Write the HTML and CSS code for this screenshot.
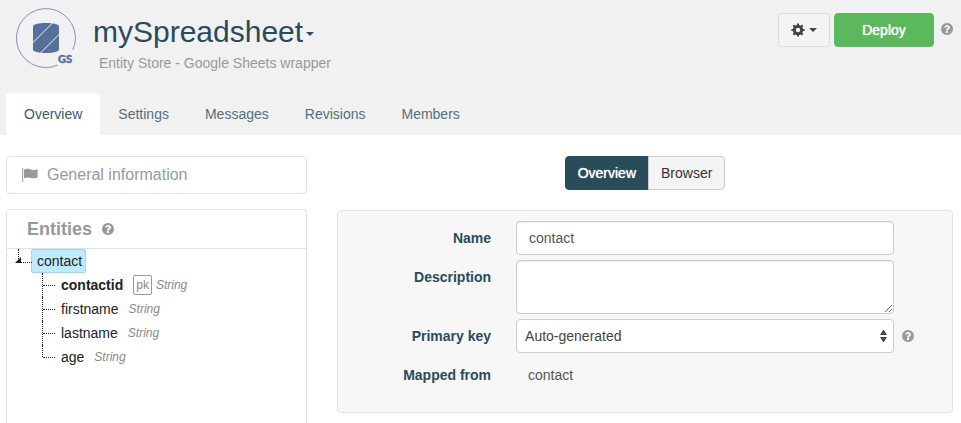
FILE: index.html
```html
<!DOCTYPE html>
<html lang="en">
<head>
<meta charset="utf-8">
<meta name="viewport" content="width=device-width, initial-scale=1">
<title>mySpreadsheet</title>
<link rel="stylesheet" href="styles.css">
</head>
<body>
<svg class="sprite" aria-hidden="true">
  <symbol id="help" viewBox="0 0 1536 1536"><path d="M896 1248v-192q0 -14 -9 -23t-23 -9h-192q-14 0 -23 9t-9 23v192q0 14 9 23t23 9h192q14 0 23 -9t9 -23zM1152 576q0 -88 -55.5 -163t-138.5 -116t-170 -41q-243 0 -371 213q-15 24 8 42l132 100q7 6 19 6q16 0 25 -12q53 -68 86 -92q34 -24 86 -24q48 0 85.5 26t37.5 59q0 38 -20 61t-68 45q-63 28 -115.5 86.5t-52.5 125.5v36q0 14 9 23t23 9h192q14 0 23 -9t9 -23q0 -19 21.5 -49.5t54.5 -49.5q32 -18 49 -28.5t46 -35t44.5 -48t28 -60.5t12.5 -81zM1536 768q0 209 -103 385.5t-279.5 279.5t-385.5 103t-385.5 -103t-279.5 -279.5t-103 -385.5t103 -385.5t279.5 -279.5t385.5 -103t385.5 103t279.5 279.5t103 385.5z"/></symbol>
</svg>
<div class="page">
  <header class="header">
    <div class="masthead">
      <svg class="logo" viewBox="0 0 62 60" aria-hidden="true">
        <path class="logo-ring" d="M56.900 42A29.500 29.500 0 1 0 41.700 57.100"/>
        <path class="logo-store" d="M17 18.500C17 16.500 22.500 15 30 15S43 16.500 43 18.500V41.500C43 43.500 37.500 45 30 45S17 43.500 17 41.500Z"/>
        <path class="logo-stripe" d="M16.500 35L37 14.500M24 45.500L43.500 26"/>
        <text class="logo-text" x="42" y="55">GS</text>
      </svg>
      <div class="heading">
        <h1 class="title">mySpreadsheet<span class="caret"></span></h1>
        <p class="subtitle">Entity Store - Google Sheets wrapper</p>
      </div>
      <div class="actions">
        <button class="btn btn-gear" type="button" aria-label="Options">
          <svg class="gear" viewBox="0 0 14 14" aria-hidden="true"><circle cx="7" cy="7" r="3.700"/><path d="M7 .4v3M7 10.600v3M.4 7h3M10.600 7h3M2.300 2.300l2.100 2.100M9.600 9.600l2.100 2.100M2.300 11.700l2.100-2.100M9.600 4.400l2.100-2.100"/></svg>
          <span class="caret"></span>
        </button>
        <button class="btn btn-deploy" type="button">Deploy</button>
        <svg class="help"><use href="#help"/></svg>
      </div>
    </div>
    <nav class="tabs">
      <a class="tab tab-active" href="#overview">Overview</a>
      <a class="tab" href="#settings">Settings</a>
      <a class="tab" href="#messages">Messages</a>
      <a class="tab" href="#revisions">Revisions</a>
      <a class="tab" href="#members">Members</a>
    </nav>
  </header>
  <main class="content">
    <aside class="side">
      <a class="panel general" href="#general">
        <svg class="flag" viewBox="0 0 16 14" aria-hidden="true"><path d="M.2 0h1v14h-1zM2 1.800C4 .7 6 .5 8 1.300s4.500 1 7.600 0v8.200c-2.600 1.100-5 1-7 .4s-4-.7-6.600.4z"/></svg>
        General information
      </a>
      <section class="panel entities">
        <h2 class="entities-title">Entities <svg class="help"><use href="#help"/></svg></h2>
        <ul class="tree">
          <li class="root">
            <span class="node node-selected">contact</span>
            <ul class="fields">
              <li class="field"><b>contactid</b><span class="pk">pk</span><i class="type type-pk">String</i></li>
              <li class="field">firstname<i class="type">String</i></li>
              <li class="field">lastname<i class="type">String</i></li>
              <li class="field">age<i class="type">String</i></li>
            </ul>
          </li>
        </ul>
      </section>
    </aside>
    <section class="main">
      <div class="switch">
        <button class="btn switch-btn switch-on" type="button">Overview</button>
        <button class="btn switch-btn" type="button">Browser</button>
      </div>
      <form class="panel form">
        <label class="label" for="name">Name</label>
        <input class="control" id="name" type="text" value="contact">
        <label class="label" for="description">Description</label>
        <textarea class="control" id="description" rows="2"></textarea>
        <label class="label" for="key">Primary key</label>
        <div class="select-wrap">
          <select class="control select" id="key"><option>Auto-generated</option></select>
          <svg class="arrows" viewBox="0 0 7 14" aria-hidden="true"><path d="M3.500 .5L7 6H0zM3.500 13.500L7 8H0z"/></svg>
        </div>
        <svg class="help help-key"><use href="#help"/></svg>
        <label class="label" for="mapped">Mapped from</label>
        <output class="static" id="mapped">contact</output>
      </form>
    </section>
  </main>
</div>
</body>
</html>
```
FILE: styles.css
```css
* { box-sizing: border-box; }

body {
  margin: 0;
  background: #fff;
  color: #222;
  font: 14px/20px "Liberation Sans", Arial, sans-serif;
}

h1, h2, p, ul { margin: 0; padding: 0; list-style: none; }
a { color: inherit; text-decoration: none; }
button, input, textarea, select { font: inherit; margin: 0; }
svg { display: block; }

.sprite { display: none; }
.page { min-height: 100vh; display: flex; flex-direction: column; }

.header { background: #f1f1f1; }
.masthead { display: flex; padding: 8px 8px 20px 16px; }
.logo { width: 62px; height: 60px; overflow: visible; }
.logo-ring { fill: none; stroke: #7f94b8; stroke-width: 1; }
.logo-store { fill: #566f9b; }
.logo-stripe { stroke: #f1f1f1; stroke-width: 1; }
.logo-text { fill: #566f9b; stroke: #566f9b; stroke-width: .4; font: 900 11px Lato, sans-serif; }

.heading { flex: 1; padding: 6px 0 0 15px; }
.title { color: #2a4b5a; font-size: 30px; line-height: 36px; font-weight: 400; }
.subtitle { padding: 3px 0 0 6px; color: #999; }
.caret {
  display: inline-block;
  border: solid transparent;
  border-width: 4px 4px 0;
  border-top-color: currentColor;
  vertical-align: middle;
}
.title .caret { margin-left: 3px; }

.actions { display: flex; align-items: flex-start; padding-top: 5px; }
.btn {
  height: 34px;
  border: 1px solid #ccc;
  border-radius: 4px;
  background: #f4f4f4;
  color: #333;
  padding: 0 12px;
}
.btn-gear { display: flex; align-items: center; gap: 4px; margin-right: 4px; border-color: #ddd; color: #444; }
.gear { width: 14px; height: 14px; fill: none; stroke: #444; stroke-width: 2; }
.gear circle { stroke-width: 3; }
.btn-deploy {
  width: 100px;
  border-color: #5cb85c;
  background: #5cb85c;
  color: #fff;
  text-shadow: 0 0 1px #fff;
}
.help { width: 12px; height: 12px; fill: #999; }
.actions .help { margin: 10px 0 0 7px; }

.tabs { display: flex; padding-left: 6px; }
.tab { padding: 11px 18px; border-radius: 4px 4px 0 0; color: #54707c; }
.tab-active { background: #fff; color: #3b5a6a; }

.content {
  flex: 1;
  display: grid;
  grid-template-columns: 301fr 616fr;
  gap: 30px;
  padding: 21px 8px 0 6px;
}
.panel { border: 1px solid #e2e2e2; border-radius: 4px; }

.side { display: flex; flex-direction: column; gap: 15px; }
.general { display: flex; align-items: center; gap: 9px; padding: 8px 15px; color: #999; font-size: 16px; }
.flag { width: 16px; height: 14px; fill: #999; }
.entities { flex: 1; border-bottom: 0; border-radius: 4px 4px 0 0; }
.entities-title {
  display: flex;
  align-items: center;
  gap: 10px;
  padding: 9px 20px;
  border-bottom: 1px solid #e2e2e2;
  color: #999;
  font-size: 18px;
}

.tree { padding-left: 24px; line-height: 24px; }
.root { position: relative; }
.root::before {
  content: "";
  position: absolute;
  left: -13px;
  top: 0;
  width: 13px;
  height: 13px;
  border: dotted #222;
  border-width: 0 0 1px 1px;
}
.root::after {
  content: "";
  position: absolute;
  left: -16px;
  top: 8px;
  border: solid transparent;
  border-width: 0 0 6px 6px;
  border-bottom-color: #222;
}
.node { display: inline-block; padding: 0 3px 0 5px; border: 1px solid transparent; border-radius: 2px; line-height: 22px; vertical-align: top; }
.node-selected { background: #beebff; border-color: #a5d5ec; }
.fields { padding-left: 30px; }
.field { position: relative; display: flex; align-items: center; height: 24px; }
.field::before {
  content: "";
  position: absolute;
  left: -19px;
  top: 0;
  height: 100%;
  border-left: 1px dotted #222;
}
.field:last-child::before { height: 12px; }
.field::after {
  content: "";
  position: absolute;
  left: -18px;
  top: 12px;
  width: 12px;
  border-top: 1px dotted #222;
}
.pk { margin-left: 10px; padding: 0 2px; border: 1px solid #999; border-radius: 2px; color: #888; font-size: 12px; line-height: 18px; }
.type { margin-left: 10px; color: #888; font-size: 12px; }
.type-pk { margin-left: 4px; }

.switch { display: flex; justify-content: center; margin-bottom: 20px; }
.switch-btn { border-radius: 0 4px 4px 0; margin-left: -1px; }
.switch-on { border-radius: 4px 0 0 4px; margin-left: 0; border-color: #2a4b5a; background: #2a4b5a; color: #fff; text-shadow: 0 0 1px #fff; }

.form {
  display: grid;
  grid-template-columns: 29% 1fr 58px;
  row-gap: 5px;
  padding: 10px 0 20px;
  background: #f7f7f7;
}
.label { grid-column: 1; padding: 7px 25px 7px 0; color: #2a4b5a; font-weight: 700; text-align: right; }
.control {
  display: block;
  width: 100%;
  padding: 6px 12px;
  border: 1px solid #ccc;
  border-radius: 4px;
  background: #fff;
  color: #555;
  box-shadow: inset 0 1px 1px rgba(0, 0, 0, .075);
}
.select-wrap { position: relative; }
.select { height: 34px; padding: 0 8px; appearance: none; box-shadow: none; color: #444; }
.arrows { position: absolute; right: 7px; top: 10px; width: 7px; height: 14px; fill: #444; }
.help-key { align-self: center; margin-left: 8px; }
.static { padding: 7px 12px; color: #555; }
```
